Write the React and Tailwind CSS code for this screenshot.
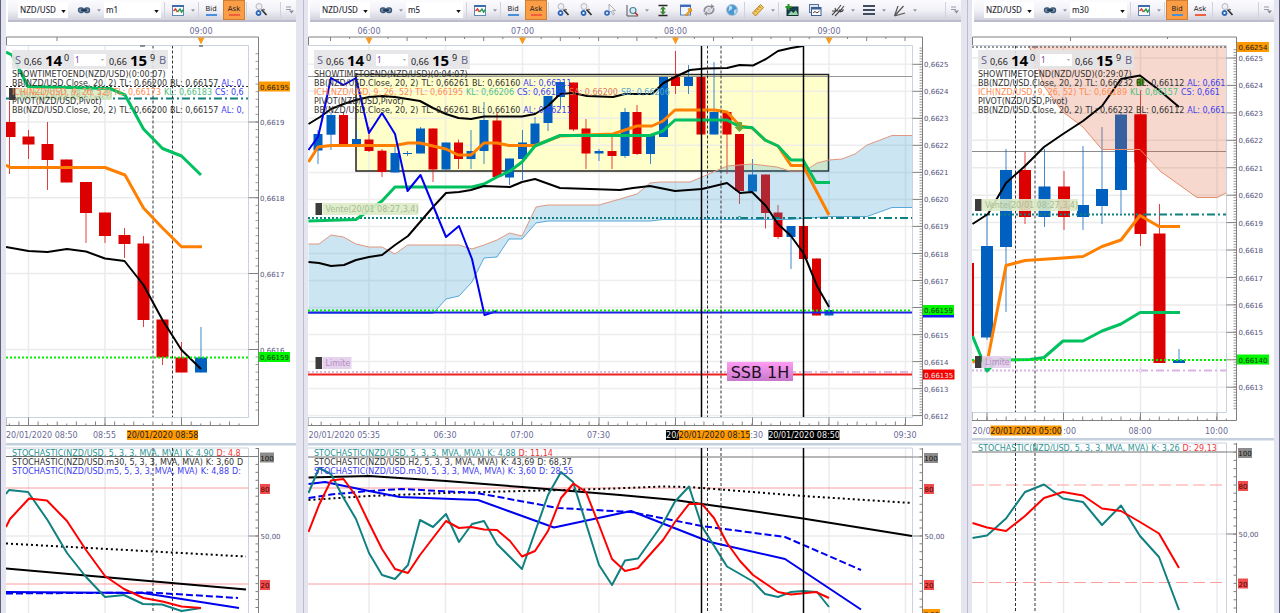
import React from "react";

const UP = "#0060c0";
const DOWN = "#dc0000";
const TEAL = "#108080";

/* ---------- toolbar ---------- */

const ICONS = {
  link: (
    <>
      <rect x="1.500" y="5" width="5" height="4.500" rx="2" fill="#7a93b0" stroke="#3c5878" strokeWidth="1.300" />
      <rect x="7.500" y="5" width="5" height="4.500" rx="2" fill="#7a93b0" stroke="#3c5878" strokeWidth="1.300" />
      <path d="M4 7.200h6" stroke="#1f3550" strokeWidth="1.800" />
    </>
  ),
  chart: (
    <>
      <rect x="1.500" y="2.500" width="11" height="10" fill="#fff" stroke="#5f86b8" />
      <path d="M1 3h12" stroke="#3e6cab" strokeWidth="2" />
      <path d="M2.500 8l2-2 2 3" fill="none" stroke="#e04030" strokeWidth="1.500" />
      <path d="M6.500 9l2.500-3 1.500 3 2-2.500" fill="none" stroke="#2c9a52" strokeWidth="1.500" />
    </>
  ),
  wrench: (
    <>
      <circle cx="5" cy="3.500" r="3" fill="#eef0f4" stroke="#b4b8c2" />
      <path d="M7.500 6.500l5 5.500" stroke="#333" strokeWidth="1.800" />
      <path d="M9 6l2 1" stroke="#555" />
      <circle cx="4.500" cy="10" r="2" fill="#fff" stroke="#2d65b8" strokeWidth="1.800" />
    </>
  ),
  pointer: (
    <>
      <path d="M7 1v9l2-2 2 4 1.500-1-2-3.500h3z" fill="#f4f4f8" stroke="#9a9aa6" strokeWidth=".8" />
      <circle cx="5" cy="10" r="2" fill="#cfe0f5" stroke="#2d65b8" strokeWidth="1.600" />
    </>
  ),
  zoomChart: (
    <>
      <path d="M2 2v11h11" fill="none" stroke="#555" />
      <circle cx="8" cy="7.500" r="3" fill="#d5eef5" stroke="#4d8095" strokeWidth="1.200" />
      <path d="M10 9.500l3 3" stroke="#b03020" strokeWidth="1.500" />
    </>
  ),
  height: (
    <>
      <path d="M2.500 2.500h9M2.500 12.500h9" stroke="#2a2a2a" strokeWidth="1.500" />
      <path d="M7 3l3 3.500H8v2h2L7 12 4 8.500h2v-2H4z" fill="#3f8a35" />
    </>
  ),
  note: (
    <>
      <rect x="1.500" y="2" width="10" height="10" fill="#f2f7ff" stroke="#5480c0" />
      <path d="M1 3h11" stroke="#3e6cc0" strokeWidth="2" />
      <path d="M6 12l4-4-1-2 3-1 1 3-2 1-3 4z" fill="#f3a51c" stroke="#c77808" strokeWidth=".6" />
    </>
  ),
  refresh: (
    <>
      <path d="M2.500 9c-1-4 3-7 7-5M11.500 5c1 4-3 7-7 5" fill="none" stroke="#8d9096" strokeWidth="1.600" />
      <path d="M9 1l3.500 2.500L9 6zM5 8l-3 2.500L5 13z" fill="#8d9096" />
      <circle cx="7" cy="7" r="2" fill="#c9ccd2" />
    </>
  ),
  globe: (
    <>
      <circle cx="7" cy="7" r="5.500" fill="#4b97d0" stroke="#a8c3da" />
      <path d="M4 3.500c3-1.500 4 1 3 2.500s-3 1-3.500 3M9 7l3-1-1 4-2 1z" fill="#b8dcf2" />
    </>
  ),
  ruler: (
    <>
      <path d="M1.500 10L9.500 1.500l3 3L4.500 13z" fill="#f1c661" stroke="#b98727" />
      <path d="M4 7.500l1.500 1.500M6 5.500L7.500 7M8 3.500L9.500 5" stroke="#8f6418" strokeWidth=".8" />
    </>
  ),
  image: (
    <>
      <rect x="2" y="4" width="11" height="8.500" fill="#173f4c" stroke="#14323a" />
      <path d="M3 12l3-4 2.500 2L11 7l2 5z" fill="#9ad4a4" />
      <path d="M3.500 1v6M.5 4h6" stroke="#2c9326" strokeWidth="2" />
    </>
  ),
  windows: (
    <>
      <rect x="1.500" y="1.500" width="9" height="8" fill="#dbe7f5" stroke="#5b7397" />
      <rect x="3.500" y="4.500" width="9.500" height="8" fill="#fff" stroke="#3e5f92" />
      <path d="M3.500 5.500h9.500" stroke="#3e5f92" strokeWidth="2" />
      <path d="M5 10l2-1.500 2 1.500 2.500-2" fill="none" stroke="#444" />
    </>
  ),
  fork: <path d="M1 12l5-5L10 2M4 13l5-5 4-5M1 8h9M4 5l1 3M8 7l5 0M9 9l3-1" fill="none" stroke="#444" strokeWidth="1.100" />,
  lines: <path d="M1 3h12M1 7h12M1 11h12" stroke="#3f4d5c" strokeWidth="2.200" />,
  fan: <path d="M1.500 13L5 3M1.500 13l9-10M1.500 13L12 10" fill="none" stroke="#555" strokeWidth="1.200" />,
};

const IconButton = ({ name }) => (
  <button type="button" aria-label={name} className="flex w-[23px] shrink-0 justify-center">
    <svg viewBox="0 0 14 14" className="h-[14px] w-[14px]">
      {ICONS[name]}
    </svg>
  </button>
);

const Caret = () => (
  <button type="button" aria-label="more" className="flex w-2 shrink-0 justify-center">
    <svg viewBox="0 0 6 4" className="h-[3px] w-1">
      <path d="M0 0h6L3 4z" fill="#9696a4" />
    </svg>
  </button>
);

const Sep = () => <span className="mx-px h-4 w-px shrink-0 bg-[#d2d2de]" />;

const Combo = ({ label, options, width }) => (
  <div className={`relative h-4 shrink-0 bg-white ${width}`}>
    <select
      aria-label={label}
      className="block h-4 w-full appearance-none bg-transparent pl-[2px] text-[8px] leading-4 font-medium text-[#30303c] outline-none [font-family:'Noto_Sans',sans-serif]"
    >
      {options.map((o) => (
        <option key={o}>{o}</option>
      ))}
    </select>
    <svg viewBox="0 0 6 4" className="pointer-events-none absolute top-2 right-[2px] h-[3px] w-[5px]">
      <path d="M0 0h6L3 4z" fill="#111" />
    </svg>
  </div>
);

const PriceButton = ({ label, bar, active }) => (
  <button
    type="button"
    aria-pressed={active}
    className={`flex h-5 w-[22px] shrink-0 flex-col items-center justify-center text-[7px] leading-2 text-[#222] ${
      active ? "border border-[#d08030] bg-[#fb9d45]" : ""
    }`}
  >
    {label}
    <span className={`mt-px h-[2px] w-[11px] ${bar}`} />
  </button>
);

const Toolbar = ({ period, side, full }) => (
  <div className="ml-[2px] flex h-[22px] items-center overflow-hidden border-b-2 border-[#bcbccc] bg-linear-to-b from-[#fcfcff] via-[#f1f1f7] to-[#d3d3df] pl-[10px]">
    <Combo label="Symbol" options={["NZD/USD", "EUR/USD", "GBP/USD"]} width="w-[50px]" />
    <span className="w-1 shrink-0" />
    <IconButton name="link" />
    <Caret />
    <span className="w-px shrink-0" />
    <Combo label="Period" options={[period, "H1", "H2"]} width="w-[57px]" />
    <span className="w-[2px] shrink-0" />
    <Sep />
    <IconButton name="chart" />
    <Caret />
    <Sep />
    <PriceButton label="Bid" bar="bg-[#4a8fdc]" active={side === "bid"} />
    <span className="w-px shrink-0" />
    <PriceButton label="Ask" bar="bg-[#f0603c]" active={side === "ask"} />
    <Sep />
    <span className="w-px shrink-0" />
    <IconButton name="wrench" />
    {full && (
      <>
        <IconButton name="wrench" />
        <IconButton name="pointer" />
        <IconButton name="zoomChart" />
        <Caret />
        <IconButton name="height" />
        <IconButton name="note" />
        <IconButton name="refresh" />
        <IconButton name="globe" />
        <Sep />
        <IconButton name="ruler" />
        <Caret />
        <Sep />
        <IconButton name="image" />
        <IconButton name="windows" />
        <IconButton name="fork" />
        <Caret />
        <IconButton name="lines" />
        <Caret />
        <IconButton name="fan" />
        <Caret />
      </>
    )}
    <span className="ml-auto" />
    <Sep />
    <button type="button" aria-label="Toolbar options" className="mr-[2px] ml-1 shrink-0">
      <svg viewBox="0 0 8 8" className="h-2 w-2">
        <path d="M0 1h5M0 3.500h5" stroke="#9a9aaa" />
        <path d="M3 4.500h5L5.500 7.500z" fill="#8a8a9a" />
      </svg>
    </button>
  </div>
);

/* ---------- overlays ---------- */

const QuoteBar = () => (
  <div className="absolute top-[28px] left-[6px] flex h-[19px] w-[156px] items-center bg-[#e4e4e8]/90 text-[#222] [font-family:'Noto_Sans',sans-serif]">
    <button type="button" className="w-3 text-[11px] leading-4 text-[#66668a]">S</button>
    <span className="w-[21px] pt-1 text-[9px] leading-3">0,66</span>
    <span className="w-[19px] text-[15px] leading-4 font-bold text-black">14</span>
    <sup className="top-0 w-[10px] pb-1 text-[9px] leading-3">0</sup>
    <div className="relative h-3 w-8 bg-white">
      <select
        aria-label="Amount"
        className="block h-3 w-full appearance-none bg-transparent pl-px text-[8px] leading-3 text-[#8040a0] outline-none"
      >
        <option>1</option>
        <option>2</option>
      </select>
      <svg viewBox="0 0 6 4" className="pointer-events-none absolute top-[5px] right-[2px] h-[2px] w-[3px]">
        <path d="M0 0h6L3 4z" fill="#aaa" />
      </svg>
    </div>
    <span className="w-[24px] pt-1 pl-[3px] text-[9px] leading-3">0,66</span>
    <span className="w-[20px] text-[15px] leading-4 font-bold text-black">15</span>
    <sup className="top-0 w-[9px] pb-1 text-[9px] leading-3">9</sup>
    <button type="button" className="text-[11px] leading-4 text-[#66668a]">B</button>
  </div>
);

// each row is a list of [text, color class]
const Legend = ({ rows, place }) => (
  <div
    className={`pointer-events-none absolute right-[46px] left-[6px] overflow-hidden text-[8px] leading-[9px] whitespace-nowrap ${place}`}
  >
    {rows.map((row, i) => (
      <p key={i} className="flex gap-[3px]">
        {row.map(([text, color], j) => (
          <span key={j} className={color}>
            {text}
          </span>
        ))}
      </p>
    ))}
  </div>
);

/* ---------- chart parts ---------- */

const Line = ({ points, color, width = 2, dash }) => (
  <polyline points={points} fill="none" stroke={color} strokeWidth={width} strokeDasharray={dash} strokeLinejoin="round" />
);

const HLine = ({ x1, x2, y, color, width = 1, dash }) => (
  <path d={`M${x1} ${y}H${x2}`} stroke={color} strokeWidth={width} strokeDasharray={dash} />
);

const VLine = ({ x, y1, y2, color = "#333", width = 1, dash = "3 2" }) => (
  <path d={`M${x} ${y1}V${y2}`} stroke={color} strokeWidth={width} strokeDasharray={dash} />
);

// [color, x, high, bodyTop, bodyBottom, low]
const Candles = ({ data, width }) =>
  data.map(([c, x, high, top, bottom, low]) => (
    <g key={x}>
      <path d={`M${x} ${high}V${low}`} stroke={c === "u" ? UP : DOWN} opacity=".75" />
      <rect x={x - width / 2} y={top} width={width} height={bottom - top} fill={c === "u" ? UP : DOWN} />
    </g>
  ));

const Grid = ({ left, right, top, bottom, xs, ys }) => (
  <g stroke="#ebebeb" strokeWidth="1.500">
    {xs.map((x) => (
      <path key={x} d={`M${x} ${top}V${bottom}`} />
    ))}
    {ys.map((y) => (
      <path key={y} d={`M${left} ${y}H${right}`} />
    ))}
  </g>
);

const range = (from, to, step) => {
  const out = [];
  for (let v = from; v <= to; v += step) out.push(v);
  return out;
};

const Frame = ({ left, right, axis, bottom, xs, ys, tick, yTick, topTicks }) => (
  <g fill="none" stroke="#808080">
    <path d={`M${left} 45.500H${right}V${bottom}H${left}`} stroke="#c9d3df" />
    <path d={`M${left + 0.5} 45V37H${axis}V${bottom + 8}H${left}V${bottom}`} />
    {xs.map((x) => (
      <path key={x} d={`M${x} ${bottom}v8`} />
    ))}
    {range(xs[0] % tick, right, tick)
      .filter((x) => x > left)
      .map((x, i) => (
        <path key={x} d={`M${x} ${bottom + (i % 2 ? 4 : 6)}V${bottom + 8}`} />
      ))}
    {ys.map((y) => (
      <path key={y} d={`M${right} ${y}H${axis}`} />
    ))}
    {range(48 + ((ys[0] - 48) % yTick), bottom - 2, yTick).map((y) => (
      <path key={y} d={`M${axis - 3} ${y}H${axis}`} strokeWidth=".8" />
    ))}
    {topTicks.map((x, i) => (
      <path key={x} d={`M${x} 37v${i % 2 ? 2 : 4}`} />
    ))}
  </g>
);

// hidden is the price whose label lies behind a flag
const PriceLabels = ({ x, first, ys, hidden }) =>
  ys.map((y, i) =>
    first - i === hidden ? null : (
      <text key={y} x={x} y={y + 3} fontSize="7" fill="#54547c">
        {`0,${first - i}`}
      </text>
    )
  );

const TimeLabel = ({ x, y, anchor = "middle", children }) => (
  <text x={x} y={y} fontSize="8" fill="#6a6a98" textAnchor={anchor}>
    {children}
  </text>
);

const Flag = ({ x, y, width, size = 7, bg, color, children }) => (
  <g>
    <rect x={x} y={y} width={width} height="10" fill={bg} />
    <text x={x + width / 2} y={y + 8} fontSize={size} fill={color} textAnchor="middle">
      {children}
    </text>
  </g>
);

const Tag = ({ x, y, width, bg, color, children }) => (
  <g>
    <rect x={x} y={y} width="6.500" height="12" fill="#3c3c3c" />
    <rect x={x + 7} y={y} width={width} height="12" fill={bg} opacity=".9" />
    <text x={x + 10} y={y + 9} fontSize="8" fill={color}>
      {children}
    </text>
  </g>
);

const Marker = ({ x }) => <path d={`M${x - 3.5} 37.500h7l-3.500 7z`} fill="#f79a1e" />;

const Vente = ({ x, y }) => (
  <Tag x={x} y={y} width={96} bg="#dcebc8" color="#a9bc92">
    Vente(20/01 08:27,3,4)
  </Tag>
);

const Limite = ({ x, y }) => (
  <Tag x={x} y={y} width={29} bg="#e2cdea" color="#b48cc4">
    Limite
  </Tag>
);

const OscFrame = ({ left, right, axis, top, y100, y80, y50, y20, dash }) => (
  <g>
    <path d={`M${left} ${top}H${right}V613`} fill="none" stroke="#c9d3df" />
    <HLine x1={left} x2={right} y={y100} color="#707070" />
    <HLine x1={left} x2={right} y={y80} color="#ff9c9c" dash={dash} />
    <HLine x1={left} x2={right} y={y20} color="#ff9c9c" dash={dash} />
    <path d={`M${axis} ${top}V613`} stroke="#808080" />
    <path d={`M${right} ${y50}H${axis}M${right} ${y100}H${axis}`} stroke="#808080" />
    {range(y100 - 8, 612, (y50 - y100) / 10).map((y) => (
      <path key={y} d={`M${axis - 3} ${y}H${axis}`} stroke="#808080" />
    ))}
    <Flag x={axis + 1.5} y={y100 - 4} width={14} bg="#8c8c8c" color="#111">100</Flag>
    <Flag x={axis + 1.5} y={y80 - 4} width={10} bg="#f04c4c" color="#400">80</Flag>
    <text x={axis + 2} y={y50 + 3} fontSize="7" fill="#54547c">50,00</text>
    <Flag x={axis + 1.5} y={y20 - 4} width={10} bg="#f04c4c" color="#400">20</Flag>
  </g>
);

/* ---------- m1 ---------- */

const m1X = [28.5, 105, 181.5];
const m1Y = [122, 197.7, 273.5, 349.5];
const m1Candles = [
  ["d", 9.5, 101, 122, 137, 174],
  ["d", 28.5, 130, 136.5, 144.5, 159],
  ["d", 47.5, 122, 144, 160, 190],
  ["d", 66.5, 159.5, 159.5, 182.5, 182.5],
  ["d", 86, 182, 182, 213, 243],
  ["d", 105, 212.5, 212.5, 236, 243],
  ["d", 124.5, 228, 235, 244, 258],
  ["d", 143.5, 236, 243.5, 320, 327],
  ["d", 162.5, 319.5, 319.5, 357.5, 365],
  ["d", 181.5, 342, 357.5, 372.5, 372.5],
  ["u", 201, 327, 357.5, 372.5, 372.5],
];

const M1Price = () => (
  <svg viewBox="6 22 290 421" className="block h-auto w-full">
    <Grid left={6} right={248.5} top={45.5} bottom={417} xs={m1X} ys={m1Y} />
    <Candles data={m1Candles} width={12} />
    <HLine x1={6} x2={248} y={86.5} color="#333" dash="2 2" />
    <HLine x1={6} x2={248} y={98.5} color={TEAL} width={2} dash="8 3 2 3" />
    <VLine x={153} y1={45.5} y2={417} />
    <VLine x={172.5} y1={45.5} y2={417} />
    <Vente x={9} y={88} />
    <Line points="6,52 12,55 28,86.500 110,88.500 125,95 143.500,129 162.500,148.500 181.500,156 201,175" color="#00c060" width={3} />
    <Line points="6,165 10,167.500 105,167.500 125,175 143.500,208 162.500,228 181.500,246.700 202,246.700" color="#ff8000" width={3} />
    <Line points="6,247 28.500,251 47.500,252 67,249 86,251.500 105,258.500 124.500,261 143.500,285 162.500,320 181.500,350 201,369" color="#000" />
    <HLine x1={6} x2={248} y={357.5} color="#00f000" width={2} dash="2 2" />
    <Frame left={6} right={248.5} axis={258.5} bottom={417.5} xs={m1X} ys={m1Y} tick={9.57} yTick={7.58} topTicks={[57]} />
    <path d="M140 46h5M199 46h4" stroke="#333" />
    <Marker x={201} />
    <TimeLabel x={201} y={34}>09:00</TimeLabel>
    <PriceLabels x={260} first={6619} ys={m1Y} />
    <Flag x={259} y={81.5} width={31} bg="#ff9900" color="#222">0,66195</Flag>
    <Flag x={259} y={352} width={31} bg="#00f800" color="#143014">0,66159</Flag>
    <TimeLabel x={6} y={438} anchor="start">20/01/2020 08:50</TimeLabel>
    <TimeLabel x={104.5} y={438}>08:55</TimeLabel>
    <Flag x={127} y={430} width={71} size={8} bg="#ff9900" color="#222">20/01/2020 08:58</Flag>
  </svg>
);

const M1Osc = () => (
  <svg viewBox="6 446 290 167" className="block h-auto w-full">
    <Grid left={6} right={248.5} top={448} bottom={613} xs={m1X} ys={[536]} />
    <OscFrame left={6} right={248.5} axis={258.5} top={448} y100={456.5} y80={488} y50={536} y20={584} />
    <VLine x={153} y1={448} y2={613} />
    <VLine x={172.5} y1={448} y2={613} />
    <Line points="6,543.500 246,556.500" color="#000" dash="2 3" />
    <Line points="6,568.500 246,589.500" color="#000" />
    <Line points="6,593.500 150,592.500 238,598" color="#0000f0" dash="7 3" />
    <Line points="6,592 143,593 239,608" color="#0000f0" />
    <Line points="6,494 9,490 28,492 47.500,520 67,553 86,577 105,597 124,595 143,604 162,604.500 181.500,611 201,608" color={TEAL} />
    <Line points="6,527 10,519 29,498.500 47,500.500 67,521 86,550 105,576 124,589 143.500,598 162.500,601.500 181.500,606.500 201,608" color="#f00" />
  </svg>
);

/* ---------- m5 ---------- */

const m5X = [369, 445.5, 522.5, 599, 675.5, 752.5, 829, 905.5];
const m5Y = [64.3, 91.3, 118.3, 145.3, 172.4, 199.4, 226.4, 253.5, 280.5, 307.5, 334.6, 361.6, 388.6, 415.6];
const m5Candles = [
  ["u", 318, 130, 134, 150.5, 164],
  ["u", 331, 112, 115, 134.7, 150],
  ["d", 343.5, 112, 115, 145.7, 147],
  ["u", 356.5, 130, 139, 144, 144],
  ["d", 369, 127, 139.5, 151, 152],
  ["d", 382, 149, 150.7, 172, 177],
  ["u", 395, 144, 153, 172.5, 172.5],
  ["u", 407.5, 151, 153, 154, 156],
  ["u", 420.5, 127, 128.5, 153.5, 153.5],
  ["d", 433, 128.5, 128.5, 169.5, 182],
  ["u", 446, 142.5, 142.5, 169.5, 170],
  ["d", 458.5, 139.5, 142.5, 159, 169],
  ["u", 471, 130, 151, 159, 169],
  ["u", 484, 102, 120, 151, 164],
  ["d", 497, 112, 120.5, 177, 177],
  ["u", 509.5, 158.5, 158.5, 177.5, 185],
  ["u", 522.5, 130, 142.5, 159, 180],
  ["u", 535, 117, 123.5, 144, 144],
  ["u", 548, 96, 96, 123, 131],
  ["u", 560.5, 82, 82, 97, 109],
  ["d", 573.5, 82.5, 82.5, 129.5, 131],
  ["d", 586, 119, 128.5, 153.5, 169],
  ["u", 599, 149, 151, 153.5, 161],
  ["d", 612, 136, 151, 156, 169],
  ["u", 625, 108, 112, 156, 158],
  ["d", 637, 105, 112, 154, 155],
  ["u", 650.5, 135, 135, 154, 164],
  ["u", 663.5, 77, 77, 137, 137],
  ["d", 675.5, 51, 77, 86, 94],
  ["u", 688.5, 65, 77, 86, 94],
  ["d", 701, 77, 77, 134.5, 134.5],
  ["u", 714, 62, 112, 134.5, 134.5],
  ["d", 727, 112, 112, 134.5, 174],
  ["d", 739.5, 134, 134, 191, 204],
  ["u", 752.5, 159, 174.5, 191.5, 191.5],
  ["d", 765.5, 174.5, 174.5, 213, 228.5],
  ["d", 778, 205, 212.5, 237, 239],
  ["u", 791, 226, 226, 237, 269],
  ["d", 803.5, 226, 226, 259, 259],
  ["d", 816.5, 258.5, 258.5, 315.5, 315.5],
  ["u", 829, 300, 310, 315.5, 315.5],
];

const m5SpanA =
  "308.500,244 319,244 331,235 343.500,237 356,244 369,247 382,247 395,254 407.500,245 459,245 472,249 484,245 497,240 509.500,233 522,236 536,207 548,205 599,205 620,199 637,194 650,183 660,182 690,182 702,177 727,166 752,164 777,167 790,171 805,171 817,163 829,160 842,159 855,154 867,145 892,135.500 912,135.500";
const m5SpanB =
  "308.500,313.500 433,313.500 446,299 459,296 472,282 484,258 497,257 509,239 522,239 536,223 548,221 650,221 663,219.500 790,219.500 829,216.500 867,216.500 892,207.500 912,207.500";
const m5Cloud = `${m5SpanA} ${m5SpanB.split(" ").reverse().join(" ")}`;

const M5Price = () => (
  <svg viewBox="308 22 653 421" className="block h-auto w-full">
    <rect x="356" y="74.500" width="472.500" height="96.500" fill="#ffffcc" />
    <g opacity=".8">
      <Grid left={308.5} right={912.5} top={45.5} bottom={417} xs={m5X} ys={m5Y} />
    </g>
    <HLine x1={308} x2={912} y={76.5} color="#999" />
    <rect x="356" y="74.500" width="472.500" height="96.500" fill="none" stroke="#222" strokeWidth="1.500" />
    <Candles data={m5Candles} width={9} />
    <polygon points={m5Cloud} fill="#3397cf" opacity=".25" />
    <Line points={m5SpanA} color="#e09880" width={1} />
    <Line points={m5SpanB} color="#58a8d8" width={1} />
    <HLine x1={308} x2={740} y={218} color={TEAL} width={2} dash="2 2" />
    <HLine x1={740} x2={912} y={218} color={TEAL} width={2} dash="8 3 2 3" />
    <HLine x1={308} x2={740} y={372} color="#d8bce4" width={2} dash="2 2" />
    <HLine x1={740} x2={912} y={372} color="#d8bce4" width={2} dash="8 3 2 3" />
    <HLine x1={308} x2={912} y={374.5} color="#f02020" width={2} />
    <Line points="308.500,162 318,147 331,145.500 395,145.500 408,143 420,143 433,146 446,149 458,155 471,155 484,143 497,143 509,145.500 535,145.500 560,136 613,134 637,126 652,126 663,121 675,110 715,110 727,112 740,126 752,128 765,140 778,146 791,165.500 803,165.500 829,215" color="#ff8000" width={3} />
    <Line points="308.500,221 356,219.500 382,201 395,187 472,187 484,184 497,177 510,171 522,162 535,146 560,135.500 650,135.500 663,131 675,120 727,120 740,127 752,127.500 765,140 778,146 791,160 803,160 816,182.500 830,182.500" color="#00c060" width={3} />
    <Line points="308.500,124 320,117 331,109 343.500,104 356,100 369,97 382,96 395,97 420,101 433,108 446,114 458.500,118 471,119 484,116.500 522,116.500 535,114 548,106 560,94 573,93 587,96 613,97 625,94 652,94 663.500,83 675,77 690,70 705,68.500 727,68 739.500,65 753,65.500 766,59 778,51 791,48 803,46" color="#000" />
    <Line points="308.500,262 319,263 331,266 344,265 356,260 369,257 382,255 395,245 408,236 433,207 446,193 459,192 471,190 484,186 510,187 522,182 535,179 560,188 620,190 633,188 650,186 675,191 702,189 727,183 740,193 752,192 766,206 778,224 791,236 804,254 817,286 829,307" color="#000" />
    <Line points="308.500,150 318,137 322,120 331,78 343.500,85 356,78 369,133 382,113 395,134 407.500,191 420.500,175 446,237 459,226 472,259 484.500,315 497,311" color="#0000f0" />
    <HLine x1={308} x2={912} y={312.5} color="#2020f0" width={2} />
    <HLine x1={308} x2={912} y={310.5} color="#00f000" width={2} dash="2 2" />
    <path d="M737 122h5v5h2.500l-5 5-5-5h2.500z" fill="#6fa832" />
    <circle cx="739.500" cy="218" r="1.500" fill="#fff" stroke={TEAL} />
    <VLine x={707.5} y1={45.5} y2={417} />
    <VLine x={721} y1={45.5} y2={417} />
    <VLine x={701.5} y1={45.5} y2={417} color="#000" width={1.5} dash="none" />
    <VLine x={803.5} y1={45.5} y2={417} color="#000" width={1.5} dash="none" />
    <Vente x={315.5} y={203} />
    <Limite x={315.5} y={357} />
    <defs>
      <linearGradient id="note" x2="0" y2="1">
        <stop offset="0" stopColor="#ff9cf4" />
        <stop offset="1" stopColor="#c878cc" />
      </linearGradient>
    </defs>
    <rect x="727" y="362" width="66" height="19" fill="url(#note)" />
    <text x="760" y="377.500" fontSize="16" fill="#1c1020" textAnchor="middle">SSB 1H</text>
    <Frame
      left={308}
      right={912.5}
      axis={922.5}
      bottom={417.5}
      xs={m5X}
      ys={m5Y}
      tick={9.57}
      yTick={2.7}
      topTicks={range(330.5, 910, 19.15)}
    />
    {m5X.filter((_, i) => i % 2 === 0).map((x, i) => (
      <g key={x}>
        <Marker x={x} />
        <TimeLabel x={x} y={34}>{`0${6 + i}:00`}</TimeLabel>
      </g>
    ))}
    <PriceLabels x={924} first={6625} ys={m5Y} hidden={6616} />
    <rect x="923" y="313" width="31" height="4.500" fill="#1818f0" />
    <Flag x={923} y={305} width={31} bg="#00f800" color="#143014">0,66159</Flag>
    <Flag x={923} y={369.5} width={31.5} bg="#f80000" color="#d8f4ec">0,66135</Flag>
    <TimeLabel x={308.5} y={438} anchor="start">20/01/2020 05:35</TimeLabel>
    <TimeLabel x={445} y={438}>06:30</TimeLabel>
    <TimeLabel x={522} y={438}>07:00</TimeLabel>
    <TimeLabel x={598.5} y={438}>07:30</TimeLabel>
    <TimeLabel x={763} y={438} anchor="end">:30</TimeLabel>
    <Flag x={666} y={430} width={13} size={8} bg="#000" color="#eee">20/</Flag>
    <Flag x={679} y={430} width={71} size={8} bg="#ff9900" color="#222">20/01/2020 08:15</Flag>
    <Flag x={768.5} y={430} width={71} size={8} bg="#000" color="#eee">20/01/2020 08:50</Flag>
    <TimeLabel x={905} y={438}>09:30</TimeLabel>
  </svg>
);

const M5Osc = () => (
  <svg viewBox="308 446 653 167" className="block h-auto w-full">
    <Grid left={308.5} right={912.5} top={448} bottom={613} xs={m5X} ys={[536]} />
    <OscFrame left={308} right={912.5} axis={922.5} top={448} y100={457} y80={488} y50={536} y20={584} />
    <Line points="308.500,500 369,496 445,493 522,491 600,489 663,486.500 689,487 803,496 912,503" color="#000" dash="2 3" />
    <Line points="308.500,477.500 369,476 446,481 522,487 620,495 675,500 702,504 752,511 803,518.500 912,536" color="#000" />
    <Line points="308.500,498 331,494.500 369,491 402,489 477,493 558,508 631,512 702,526 785,537 861,570" color="#0000f0" dash="7 3" />
    <Line points="308.500,484 325,482 369,491 400,497 478,500 554,527.500 631,511 710,542 785,559 861,609.500" color="#0000f0" />
    <Line points="308.500,493 319,468 331,474 343,497 356,519 369,553 382,575 395,579 408,565 420,520 433,527 446,514 459,542 472,524 484,521 497,544 522,569 535,532 548,495 561,472 573,482 599,565 612,585 625,560.500 638,558.500 663,523.500 675,501.500 689,486.500 702,526.500 727,566.500 753,581.500 765,594 778,597 791,592 803,591 817,592 829,607" color={TEAL} />
    <Line points="308.500,532 319,505 331,480.500 343.500,479 356,496 369,523 382,549 395,569 408,573 420,555 446,521 459,528 471,527 484,529.500 497,530 510,541 522,556.500 535,551 548,531 561,498 573.500,483.500 586,492 599,525 612,559 625,571 638,568 663,540 675,522 689,504 702,504 714,518 727,543 740,561 753,575 778,592 791,594.500 816,592 829,598" color="#f00" />
    <VLine x={707.5} y1={448} y2={613} />
    <VLine x={721} y1={448} y2={613} />
    <VLine x={701.5} y1={448} y2={613} color="#000" width={1.5} dash="none" />
    <VLine x={803.5} y1={448} y2={613} color="#000" width={1.5} dash="none" />
    <Flag x={923} y={609} width={17} bg="#ff9900" color="#222">8,50</Flag>
  </svg>
);

/* ---------- m30 ---------- */

const m30X = [987, 1063.5, 1140.5, 1217];
const m30Y = [58, 85.4, 112.9, 140.3, 167.7, 195.2, 222.6, 250, 277.5, 304.9, 332.3, 359.8, 387.2];
const m30Candles = [
  ["d", 968, 263, 263, 337, 337],
  ["u", 987, 214, 246, 337.5, 340],
  ["u", 1006, 149, 170, 247, 312],
  ["d", 1025, 152, 170, 217, 224],
  ["u", 1044.5, 149, 186.5, 217, 227],
  ["d", 1064, 171, 186.5, 217, 230],
  ["u", 1083, 146, 205, 217, 230],
  ["u", 1102, 127, 189, 206, 224],
  ["u", 1121, 112, 114.5, 190, 213],
  ["d", 1140.5, 90, 114.5, 234, 246],
  ["d", 1159.5, 204, 233.5, 363, 363],
  ["u", 1179, 349, 360, 363, 363],
];
const m30Span =
  "1029,46 1038,67 1044,86 1063,112 1083,127 1102,149.500 1140,149.500 1160,171 1197,197.500 1217,197.500 1226,193";

const M30Price = () => (
  <svg viewBox="972 22 302 416" className="block h-auto w-full">
    <Grid left={972} right={1226.5} top={45.5} bottom={412} xs={m30X} ys={m30Y} />
    <HLine x1={972} x2={1226} y={151.5} color="#8c8c8c" />
    <Candles data={m30Candles} width={12} />
    <polygon points={`${m30Span} 1226,46`} fill="#dc643c" opacity=".25" />
    <rect x="1134.500" y="114.500" width="12" height="48" fill={DOWN} />
    <Line points={m30Span} color="#e88c68" width={1} />
    <HLine x1={972} x2={1226} y={47} color="#333" dash="2 2" />
    <VLine x={1015.5} y1={45.5} y2={412} />
    <VLine x={1035} y1={45.5} y2={412} />
    <HLine x1={972} x2={1140} y={214.5} color={TEAL} width={2} dash="2 2" />
    <HLine x1={1143} x2={1226} y={214.5} color={TEAL} width={2} dash="8 3 2 3" />
    <HLine x1={972} x2={1140} y={370.5} color="#d8b4e8" width={2} dash="2 2" />
    <HLine x1={1140} x2={1226} y={370.5} color="#d8b4e8" width={2} dash="8 3 2 3" />
    <circle cx="1140.500" cy="370.500" r="1.500" fill="#fff" stroke="#d8b4e8" />
    <Line points="972.500,362 988,358 1006,265.500 1025,260.500 1063,258 1083,256.500 1102,246.500 1121,240 1140,215.500 1159,226.500 1180,226.500" color="#ff8000" width={3} />
    <Line points="972.500,336 987,371 998,360 1030,359.500 1044,357.500 1063,341 1083,341 1102,331 1121,324 1140,312.500 1180,312.500" color="#00c060" width={3} />
    <Line points="972.500,224 988,214 1006,183 1025,166 1044,147 1063,134 1083,121 1102,106 1121,79 1140,75.500 1159,90 1179,107" color="#000" />
    <HLine x1={972} x2={1226} y={360} color="#00f000" width={2} dash="2 2" />
    <circle cx="1140.500" cy="82" r="4" fill="#4c9c1c" />
    <Vente x={975} y={199} />
    <Limite x={975} y={356} />
    <Frame left={972} right={1226.5} axis={1236.5} bottom={412.5} xs={m30X} ys={m30Y} tick={9.57} yTick={2.74} topTicks={[1070.5, 1167.5]} />
    <PriceLabels x={1238.5} first={6625} ys={m30Y} hidden={6614} />
    <Flag x={1237} y={42} width={32} bg="#ff9900" color="#222">0,66254</Flag>
    <Flag x={1237} y={354.5} width={32} bg="#00f800" color="#143014">0,66140</Flag>
    <TimeLabel x={972.5} y={434} anchor="start">20/0</TimeLabel>
    <TimeLabel x={1076} y={434} anchor="end">:00</TimeLabel>
    <Flag x={990.5} y={425.5} width={71} size={8} bg="#ff9900" color="#222">20/01/2020 05:00</Flag>
    <TimeLabel x={1140} y={434}>08:00</TimeLabel>
    <TimeLabel x={1216.5} y={434}>10:00</TimeLabel>
  </svg>
);

const M30Osc = () => (
  <svg viewBox="972 441 302 172" className="block h-auto w-full">
    <Grid left={972} right={1226.5} top={443} bottom={613} xs={m30X} ys={[534]} />
    <OscFrame left={972} right={1226.5} axis={1236.5} top={443} y100={452} y80={485} y50={534} y20={582.5} dash="12 5" />
    <VLine x={1015.5} y1={443} y2={613} />
    <VLine x={1035} y1={443} y2={613} />
    <Line points="972.500,538 987,535.500 1006,518.500 1025,492 1044,484.500 1063,498.500 1083,502 1102,525 1121,505.500 1140,536 1159,557 1179,610" color={TEAL} />
    <Line points="972.500,523 987,527.500 1006,531 1025,516 1044,498 1063,492 1083,495.500 1102,508.500 1121,511 1140,522 1159,533.500 1179,568" color="#f00" />
  </svg>
);

/* ---------- legends ---------- */

const K = "text-[#333]";
const B = "text-[#4040f0]";
const O = "text-[#ff8c50]";
const G = "text-[#50c080]";
const T = "text-[#2c9494]";
const R = "text-[#f03838]";

const bands = (tl, bl, al) => [
  ["BB(NZD/USD.Close, 20, 2)", K],
  [`TL: ${tl}`, K],
  [`BL: ${bl}`, K],
  [`AL: ${al}`, B],
];

const m1Legend = [
  [["SHOWTIMETOEND(NZD/USD)(0:00:07)", K]],
  bands("0,66200", "0,66157", "0,"),
  [["ICH(NZD/USD, 9, 26, 52)", O], ["TL: 0,66173", O], ["KL: 0,66183", G], ["CS: 0,6", B]],
  [["PIVOT(NZD/USD,Pivot)", K]],
  bands("0,66200", "0,66157", "0,"),
];
const m5Legend = [
  [["SHOWTIMETOEND(NZD/USD)(0:04:07)", K]],
  bands("0,66261", "0,66160", "0,66211"),
  [
    ["ICH(NZD/USD, 9, 26, 52)", O],
    ["TL: 0,66195", O],
    ["KL: 0,66206", G],
    ["CS: 0,66159", B],
    ["SA: 0,66200", "text-[#e07858]"],
    ["SB: 0,66206", "text-[#58a8c8]"],
  ],
  [["PIVOT(NZD/USD,Pivot)", K]],
  bands("0,66261", "0,66160", "0,66211"),
];
const m30Legend = [
  [["SHOWTIMETOEND(NZD/USD)(0:29:07)", K]],
  bands("0,66232", "0,66112", "0,661"),
  [["ICH(NZD/USD, 9, 26, 52)", O], ["TL: 0,66189", O], ["KL: 0,66157", G], ["CS: 0,661", B]],
  [["PIVOT(NZD/USD,Pivot)", K]],
  bands("0,66232", "0,66112", "0,661"),
];

const m1Osc = [
  [["STOCHASTIC(NZD/USD, 5, 3, 3, MVA, MVA)", T], ["K: 4,90", T], ["D: 4,8", R]],
  [["STOCHASTIC(NZD/USD.m30, 5, 3, 3, MVA, MVA)", K], ["K: 3,60", K], ["D", K]],
  [["STOCHASTIC(NZD/USD.m5, 5, 3, 3, MVA, MVA)", B], ["K: 4,88", B], ["D:", B]],
];
const m5Osc = [
  [["STOCHASTIC(NZD/USD, 5, 3, 3, MVA, MVA)", T], ["K: 4,88", T], ["D: 11,14", R]],
  [["STOCHASTIC(NZD/USD.H2, 5, 3, 3, MVA, MVA)", K], ["K: 43,69", K], ["D: 68,37", K]],
  [["STOCHASTIC(NZD/USD.m30, 5, 3, 3, MVA, MVA)", B], ["K: 3,60", B], ["D: 28,55", B]],
];
const m30Osc = [[["STOCHASTIC(NZD/USD, 5, 3, 3, MVA, MVA)", T], ["K: 3,26", T], ["D: 29,13", R]]];

const Panel = ({ className, toolbar, price, legend, osc, oscLegend }) => (
  <section className={`min-w-0 bg-[#e5e5f0] ${className}`}>
    <div className="bg-white">
      {toolbar}
      <div className="relative">
        {price}
        <QuoteBar />
        <Legend rows={legend} place="top-[48px]" />
      </div>
      <div className="h-[3px] border-b border-[#e2e8f0] bg-[#c5d0de]" />
      <div className="relative">
        {osc}
        <Legend rows={oscLegend} place="top-[3px]" />
      </div>
    </div>
  </section>
);

const App = () => (
  <main className="grid grid-cols-[303fr_664fr_313fr] bg-[#e5e5f0] [font-family:'DejaVu_Sans',Verdana,sans-serif]">
    <Panel
      className="border-l border-[#606084] pr-[7px] pl-[5px]"
      toolbar={<Toolbar period="m1" side="ask" />}
      price={<M1Price />}
      legend={m1Legend}
      osc={<M1Osc />}
      oscLegend={m1Osc}
    />
    <Panel
      className="border-l border-[#bcbcd0] pr-[6px] pl-1"
      toolbar={<Toolbar period="m5" side="ask" full />}
      price={<M5Price />}
      legend={m5Legend}
      osc={<M5Osc />}
      oscLegend={m5Osc}
    />
    <Panel
      className="border-r border-l border-r-[#606084] border-l-[#bcbcd0] pr-[5px] pl-1"
      toolbar={<Toolbar period="m30" side="bid" />}
      price={<M30Price />}
      legend={m30Legend}
      osc={<M30Osc />}
      oscLegend={m30Osc}
    />
  </main>
);

export default App;
